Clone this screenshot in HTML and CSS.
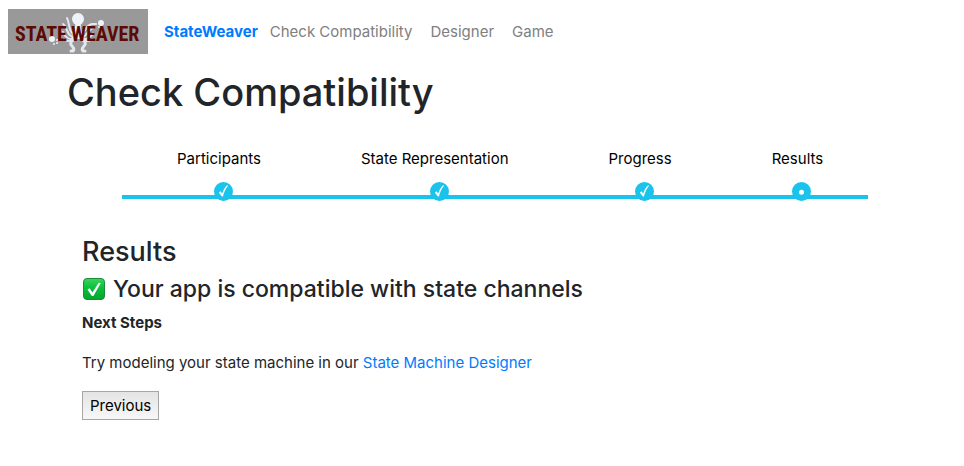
FILE: index.html
```html
<!DOCTYPE html>
<html lang="en">
<head>
    <meta charset="UTF-8">
    <meta name="viewport" content="width=device-width, initial-scale=1.0">
    <title>StateWeaver</title>
    <link rel="stylesheet" href="styles.css">
</head>
<body>

    <nav class="navbar">
        <svg class="logo" width="140" height="45" viewBox="0 0 140 45" role="img" aria-label="State Weaver">
            <rect width="140" height="45" fill="#999999"/>
            <g fill="none" stroke="#e3e8ee" stroke-width="2" stroke-linecap="round">
                <path d="M68 26C60 25 62 14 59 9"/>
                <path d="M66 28C58 27 60 18 55 15"/>
                <path d="M66 30C60 31 57 28 55 23"/>
                <path d="M66 31C61 33 58 32 56 30"/>
                <path d="M72 26C79 23 76 17 84 15L87 15"/>
                <path d="M74 28C80 27 80 20 85 19"/>
                <path d="M74 30C80 31 83 28 85 24"/>
                <path d="M74 31C79 33 82 32 84 30"/>
                <path d="M65 31C58 36 69 38 65 42L63 42" stroke-width="3"/>
                <path d="M75 31C82 36 71 38 75 42L77 42" stroke-width="3"/>
            </g>
            <g fill="#edf3fa">
                <circle cx="70" cy="10" r="6"/>
                <path d="M67 13H73C72 18 74 24 77 30H63C66 24 68 18 67 13Z"/>
                <circle cx="93" cy="14" r="3"/>
                <circle cx="88" cy="15" r="1"/>
                <circle cx="91" cy="18" r="1"/>
            </g>
            <text class="logo-text" x="7" y="32">STATE</text>
            <text class="logo-text" x="63" y="32">WEAVER</text>
            <g fill="#edf3fa">
                <circle cx="44" cy="30" r="3"/>
                <circle cx="49" cy="31" r="1"/>
                <circle cx="46" cy="35" r="1"/>
                <circle cx="49" cy="34" r="1"/>
            </g>
        </svg>
        <a class="brand" href="#">StateWeaver</a>
        <a class="nav-link" href="#compatibility">Check Compatibility</a>
        <a class="nav-link" href="#designer">Designer</a>
        <a class="nav-link" href="#game">Game</a>
    </nav>

    <main class="container">
        <h1>Check Compatibility</h1>

        <div class="content">
            <ol class="steps">
                <li>Participants
                    <svg class="dot" viewBox="0 0 19 19"><circle cx="9.500" cy="9.500" r="9.500"/><path d="M4.800 10.400L6.600 9.300L8.100 11.700C9.300 8 11 5 13.200 3.200L14 3.800C11.700 6.700 10 10.300 8.900 14.500H7.900Z"/></svg>
                </li>
                <li>State Representation
                    <svg class="dot" viewBox="0 0 19 19"><circle cx="9.500" cy="9.500" r="9.500"/><path d="M4.800 10.400L6.600 9.300L8.100 11.700C9.300 8 11 5 13.200 3.200L14 3.800C11.700 6.700 10 10.300 8.900 14.500H7.900Z"/></svg>
                </li>
                <li>Progress
                    <svg class="dot" viewBox="0 0 19 19"><circle cx="9.500" cy="9.500" r="9.500"/><path d="M4.800 10.400L6.600 9.300L8.100 11.700C9.300 8 11 5 13.200 3.200L14 3.800C11.700 6.700 10 10.300 8.900 14.500H7.900Z"/></svg>
                </li>
                <li>Results
                    <svg class="dot" viewBox="0 0 19 19"><circle cx="9.500" cy="9.500" r="9.500"/><path d="M12 10.300A2.500 2.500 0 1 1 7 10.300A2.500 2.500 0 1 1 12 10.300Z"/></svg>
                </li>
            </ol>

            <h3>Results</h3>
            <h4>
                <svg class="check" width="24" height="24" viewBox="0 0 24 24" aria-hidden="true">
                    <defs>
                        <linearGradient id="green" x1="0" y1="0" x2="0" y2="1">
                            <stop offset="0" stop-color="#3fd35f"/>
                            <stop offset="0.400" stop-color="#0cc23f"/>
                            <stop offset="1" stop-color="#05a52d"/>
                        </linearGradient>
                    </defs>
                    <rect x="1.500" y="1.500" width="21" height="21" rx="3.500" fill="url(#green)" stroke="#168f35"/>
                    <path d="M5.500 12.500L7.600 11.300L10.400 15.600L16.700 5.700L18.700 6.300L11.400 19H9.800Z" fill="#fff"/>
                </svg>
                Your app is compatible with state channels
            </h4>
            <p><strong>Next Steps</strong></p>
            <p>Try modeling your state machine in our <a href="#designer">State Machine Designer</a></p>
            <button type="button" class="btn-prev">Previous</button>
        </div>
    </main>

</body>
</html>
```
FILE: styles.css
```css
* {
    box-sizing: border-box;
}
body {
    margin: 0;
    background-color: #fff;
    color: #212529;
    font-family: Inter, sans-serif;
    font-size: 15px;
    line-height: 24px;
}
a {
    color: #007bff;
    text-decoration: none;
}
h1, h3, h4 {
    margin: 0 0 8px;
    font-weight: 500;
}
h1 {
    font-size: 38px;
    line-height: 48px;
}
h3 {
    font-size: 27px;
    line-height: 34px;
    margin-bottom: 6px;
}
h4 {
    display: flex;
    align-items: center;
    gap: 7px;
    font-size: 23px;
    line-height: 28px;
}
p {
    margin: 0 0 16px;
}
.navbar {
    display: flex;
    align-items: center;
    padding: 9px 8px;
}
.logo {
    margin-right: 16px;
}
.logo-text {
    font-family: "Liberation Sans Narrow", "Roboto Condensed", Roboto, sans-serif;
    font-size: 20px;
    font-weight: 700;
    fill: #5c0a05;
}
.brand {
    margin-right: 3px;
    font-weight: 700;
}
.nav-link {
    color: #808080;
    padding: 0 9px;
}
.container {
    padding: 5px 67px 40px;
}
.content {
    padding: 0 15px;
}
.steps {
    display: flex;
    margin: 31px 0 36px;
    padding: 0 0 0 40px;
    list-style: none;
    color: #000;
}
.steps li {
    position: relative;
    padding: 0 45px 24px 55px;
    border-bottom: 4px solid #19c3eb;
    white-space: nowrap;
}
/* the dot sits over the progress line */
.dot {
    position: absolute;
    left: 50%;
    bottom: -6px;
    width: 19px;
    height: 19px;
}
.dot circle {
    fill: #19c3eb;
}
.dot path {
    fill: #fff;
}
.btn-prev {
    padding: 1px 7px;
    border: 1px solid #a6a6a6;
    background: linear-gradient(#e4e4e4, #f7f7f7);
    color: #000;
    font-family: inherit;
    font-size: 15px;
    line-height: 25px;
}
```
